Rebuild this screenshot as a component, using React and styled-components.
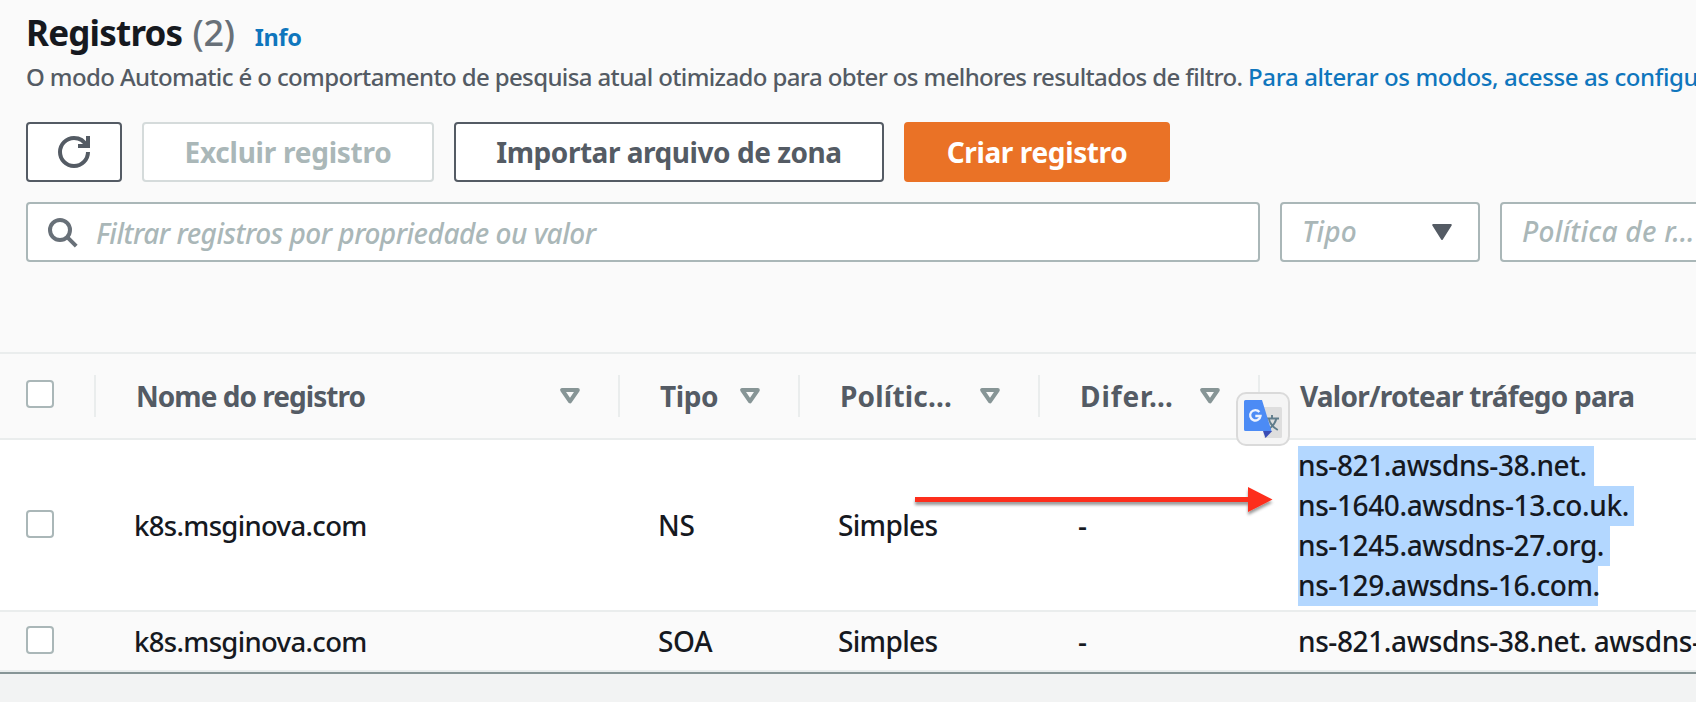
import React from 'react';
import styled, { createGlobalStyle } from 'styled-components';

const Global = createGlobalStyle`
  *, *::before, *::after { box-sizing: border-box; }
  body { margin: 0; background: #f2f3f3; overflow: hidden; }
  button { font: inherit; margin: 0; }
`;

const Page = styled.div`
  position: relative;
  width: 1696px;
  height: 702px;
  overflow: hidden;
  background: #f2f3f3;
  color: #16191f;
  font-family: "Noto Sans", "Open Sans", sans-serif;
  font-size: 28px;
  font-weight: 500;
  line-height: 40px;
  white-space: nowrap;
`;

const Panel = styled.section`
  width: 100%;
  background: #fafafa;
  border-bottom: 2px solid #879596;
`;

const PanelHeader = styled.header`
  height: 352px;
  padding: 9px 0 0 26px;
`;

const TitleRow = styled.div`
  display: flex;
  align-items: baseline;
  height: 48px;
  line-height: 48px;
`;

const Title = styled.h1`
  margin: 0;
  font-size: 35px;
  font-weight: 700;
  letter-spacing: -0.8px;
`;

const Counter = styled.span`
  margin-left: 10px;
  color: #687078;
  font-size: 36px;
  letter-spacing: -0.2px;
`;

const InfoLink = styled.a`
  margin-left: 20px;
  color: #0f76bd;
  font-size: 23.5px;
  font-weight: 700;
  letter-spacing: -0.4px;
`;

const Description = styled.p`
  margin: 0;
  height: 40px;
  color: #545b64;
  font-size: 24px;
  line-height: 40px;
  letter-spacing: -0.62px;
`;

const TextLink = styled.a`
  color: #0f76bd;
  letter-spacing: -0.39px;
`;

const Toolbar = styled.div`
  display: flex;
  gap: 20px;
  margin-top: 25px;
`;

const tones = {
  normal: { bg: '#fff', border: '#545b64', text: '#545b64' },
  disabled: { bg: '#fff', border: '#d5dbdb', text: '#aab7b8' },
  primary: { bg: '#ea7226', border: '#ea7226', text: '#fff' },
};

const Button = styled.button`
  display: flex;
  align-items: center;
  justify-content: center;
  width: ${(p) => p.$width}px;
  height: 60px;
  padding: 0;
  border: 2px solid ${(p) => tones[p.$tone].border};
  border-radius: 4px;
  background: ${(p) => tones[p.$tone].bg};
  color: ${(p) => tones[p.$tone].text};
  font-weight: 700;
  line-height: 40px;
  letter-spacing: ${(p) => p.$track || 0}px;
`;

const FilterRow = styled.div`
  display: flex;
  gap: 20px;
  margin-top: 20px;
`;

const Field = styled.div`
  display: flex;
  flex: none;
  align-items: center;
  width: ${(p) => p.$width}px;
  height: 60px;
  border: 2px solid #aab7b8;
  border-radius: 4px;
  background: #fff;
  color: #aab7b8;
  font-style: italic;
  letter-spacing: ${(p) => p.$track}px;
`;

const SearchField = styled(Field)`
  gap: 16px;
  padding: 2px 0 0 20px;
`;

const SelectField = styled(Field)`
  justify-content: space-between;
  padding: 0 26px 2px 20px;

  svg { margin-top: 2px; }
`;

const gridColumns = '96px 524px 180px 240px 220px 1fr';

const HeadRow = styled.div`
  display: grid;
  grid-template-columns: ${gridColumns};
  align-items: center;
  height: 88px;
  border-top: 2px solid #eaeded;
  border-bottom: 2px solid #eaeded;
  color: #545b64;
  font-weight: 700;
`;

const HeadCell = styled.div`
  display: flex;
  align-items: center;
  justify-content: space-between;
  height: 42px;
  padding: 0 38px 1px 40px;
  border-right: ${(p) => (p.$last ? 0 : 2)}px solid #eaeded;
  letter-spacing: ${(p) => p.$track}px;
`;

const CheckCell = styled.div`
  display: flex;
  align-items: center;
  height: 42px;
  padding: 0 0 ${(p) => (p.$divided ? 4 : 2)}px 26px;
  border-right: ${(p) => (p.$divided ? 2 : 0)}px solid #eaeded;
`;

const Checkbox = styled.span`
  width: 28px;
  height: 28px;
  border: 2px solid #aab7b8;
  border-radius: 4px;
  background: #fff;
`;

const BodyRow = styled.div`
  display: grid;
  grid-template-columns: ${gridColumns};
  align-items: center;
  height: ${(p) => p.$height}px;
  border-bottom: 2px solid #eaeded;
  background: ${(p) => (p.$striped ? '#fafafa' : '#fff')};
`;

const Cell = styled.div`
  padding: 0 0 0 38px;
  letter-spacing: ${(p) => p.$track || 0}px;
`;

const NameCell = styled(Cell)`
  padding-top: 2px;
  font-size: 27.5px;
`;

const Selection = styled.div`
  padding-top: 2px;
`;

const SelectedLine = styled.div`
  width: ${(p) => p.$width}px;
  height: 40px;
  line-height: 38px;
  background: #b3d7ff;
`;

const Annotation = styled.svg`
  position: absolute;
  left: 905px;
  top: 475px;
`;

const TranslateBadge = styled.div`
  position: absolute;
  left: 1236px;
  top: 392px;
  display: flex;
  align-items: center;
  justify-content: center;
  width: 54px;
  height: 54px;
  border: 2px solid #dadada;
  border-radius: 10px;
  background: #f5f5f5;
`;

const RefreshIcon = () => (
  <svg width="32" height="32" viewBox="0 0 16 16" fill="none" stroke="#545b64" strokeWidth="2">
    <path d="M15 8c0 3.87-3.13 7-7 7s-7-3.13-7-7 3.13-7 7-7c2.79 0 5.2 1.63 6.32 4" />
    <path d="M10 5h5V0" />
  </svg>
);

const SearchIcon = () => (
  <svg width="32" height="32" viewBox="0 0 16 16" fill="none" stroke="#687078" strokeWidth="2">
    <circle cx="6" cy="6.5" r="5" />
    <path d="M9.6 10.1L14.1 14.6" />
  </svg>
);

const SelectCaret = () => (
  <svg width="20" height="16" viewBox="0 0 20 16" fill="#545b64" stroke="#545b64" strokeWidth="2" strokeLinejoin="round">
    <path d="M1.2 1h17.6L10 15z" />
  </svg>
);

const SortCaret = () => (
  <svg width="20" height="16" viewBox="0 0 20 16" fill="none" stroke="#879596" strokeWidth="4" strokeLinejoin="round">
    <path d="M2.2 2h15.6L10 13.4z" />
  </svg>
);

const TranslateIcon = () => (
  <svg width="38" height="38" viewBox="0 0 38 38">
    <path d="M17 7h19.5a1.5 1.5 0 0 1 1.5 1.5v28a1.5 1.5 0 0 1-1.5 1.5H20z" fill="#dedede" />
    <g fill="none" stroke="#607d8b" strokeWidth="1.9">
      <path d="M22 18.5h13M28 15v3.5M25 19.5c1.5 5 5 8.5 8.8 10.5M32.3 19c-1.3 5-5 8.5-9 11" />
    </g>
    <path d="M19 31h9.2L21.5 38z" fill="#3a4db5" />
    <path d="M1.5 0H18l9.5 31H1.5A1.5 1.5 0 0 1 0 29.5v-28A1.5 1.5 0 0 1 1.5 0z" fill="#4c8bf5" />
    <path d="M15.4 12A5.2 5.2 0 1 0 16.500 16H11.3" fill="none" stroke="#eef3fd" strokeWidth="2.3" />
  </svg>
);

const columns = [
  { label: 'Nome do registro', track: -0.96 },
  { label: 'Tipo', track: -0.4 },
  { label: 'Polític…', track: 0.2 },
  { label: 'Difer…', track: 0.9 },
];

const nameServers = [
  { host: 'ns-821.awsdns-38.net.', width: 296 },
  { host: 'ns-1640.awsdns-13.co.uk.', width: 336 },
  { host: 'ns-1245.awsdns-27.org.', width: 312 },
  { host: 'ns-129.awsdns-16.com.', width: 300 },
];

const Record = ({ type, height, striped, children }) => (
  <BodyRow $height={height} $striped={striped}>
    <CheckCell><Checkbox /></CheckCell>
    <NameCell $track={-0.67}>k8s.msginova.com</NameCell>
    <Cell $track={-0.3}>{type}</Cell>
    <Cell $track={-0.67}>Simples</Cell>
    <Cell>-</Cell>
    <Cell $track={-0.4}>{children}</Cell>
  </BodyRow>
);

export default function App() {
  return (
    <Page>
      <Global />
      <Panel>
        <PanelHeader>
          <TitleRow>
            <Title>Registros</Title>
            <Counter>(2)</Counter>
            <InfoLink>Info</InfoLink>
          </TitleRow>
          <Description>
            O modo Automatic é o comportamento de pesquisa atual otimizado para obter os melhores resultados de filtro.{' '}
            <TextLink>Para alterar os modos, acesse as configurações</TextLink>
          </Description>
          <Toolbar>
            <Button $tone="normal" $width={96} aria-label="Atualizar"><RefreshIcon /></Button>
            <Button $tone="disabled" $width={292} $track={-0.25}>Excluir registro</Button>
            <Button $tone="normal" $width={430} $track={-0.46}>Importar arquivo de zona</Button>
            <Button $tone="primary" $width={266} $track={-0.37}>Criar registro</Button>
          </Toolbar>
          <FilterRow>
            <SearchField $width={1234} $track={-0.5}>
              <SearchIcon />
              Filtrar registros por propriedade ou valor
            </SearchField>
            <SelectField $width={200} $track={0.2}>
              Tipo
              <SelectCaret />
            </SelectField>
            <SelectField $width={260} $track={0.25}>
              Política de r…
              <SelectCaret />
            </SelectField>
          </FilterRow>
        </PanelHeader>
        <HeadRow>
          <CheckCell $divided><Checkbox /></CheckCell>
          {columns.map((c) => (
            <HeadCell key={c.label} $track={c.track}>
              {c.label}
              <SortCaret />
            </HeadCell>
          ))}
          <HeadCell $last $track={-0.77}>Valor/rotear tráfego para</HeadCell>
        </HeadRow>
        <Record type="NS" height={172}>
          <Selection>
            {nameServers.map((n) => (
              <SelectedLine key={n.host} $width={n.width}>{n.host}</SelectedLine>
            ))}
          </Selection>
        </Record>
        <Record type="SOA" height={60} striped>
          ns-821.awsdns-38.net. awsdns-hostmaster
        </Record>
      </Panel>
      <Annotation width="380" height="50" viewBox="0 0 380 50">
        <defs>
          <filter id="arrow-shadow" x="-5%" y="-50%" width="110%" height="220%">
            <feDropShadow dx="0" dy="3" stdDeviation="1.5" floodColor="#000" floodOpacity="0.4" />
          </filter>
        </defs>
        <path d="M10 22H343V12L367.5 24.5L343 37V27H10z" fill="#fd2d1b" filter="url(#arrow-shadow)" />
      </Annotation>
      <TranslateBadge><TranslateIcon /></TranslateBadge>
    </Page>
  );
}
